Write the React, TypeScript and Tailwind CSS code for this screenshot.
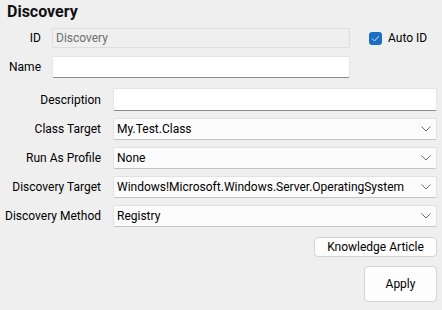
import React from "react";

function Chevron() {
  return (
    <svg width="10" height="6" viewBox="0 0 10 6" className="absolute right-[5px] top-1/2 -translate-y-1/2">
      <path d="M0.5 0.5 L5 5 L9.5 0.5" fill="none" stroke="#6b6b6b" strokeWidth="1" />
    </svg>
  );
}

function Combo({ value }: { value: string }) {
  return (
    <div className="relative ml-[12px] w-[324px] h-[22px] bg-[#fbfbfb] border border-[#e2e2e2] border-b-[#c4c4c4] rounded-[2px] flex items-center pl-[3px]">
      <span className="leading-none whitespace-nowrap">{value}</span>
      <Chevron />
    </div>
  );
}

export default function App() {
  const rows: [string, string][] = [
    ["Class Target", "My.Test.Class"],
    ["Run As Profile", "None"],
    ["Discovery Target", "Windows!Microsoft.Windows.Server.OperatingSystem"],
    ["Discovery Method", "Registry"],
  ];
  return (
    <div className="w-[442px] h-[310px] bg-[#efefef] font-['Roboto',sans-serif] text-[12px] text-black overflow-hidden">
      <div className="pl-[7px] text-[16px] font-bold leading-[24px] text-[#111]">Discovery</div>
      <div className="mt-[4px] flex items-center h-[20px]">
        <div className="w-[41px] text-right">ID</div>
        <div className="ml-[11px] w-[298px] h-[20px] border border-[#dedede] bg-[#efefef] rounded-[2px] flex items-center pl-[3px] text-[#6e6e6e]">
          Discovery
        </div>
        <div className="ml-[19px] w-[13px] h-[13px] rounded-[3px] bg-[#1b6ec2] flex items-center justify-center">
          <svg width="9" height="7" viewBox="0 0 9 7">
            <path d="M1 3.5 L3.5 6 L8 1" fill="none" stroke="#cfe3f7" strokeWidth="1" />
          </svg>
        </div>
        <span className="ml-[6px]">Auto ID</span>
      </div>
      <div className="mt-[8px] flex items-center h-[22px]">
        <div className="w-[41px] text-right">Name</div>
        <div className="ml-[11px] w-[298px] h-[22px] bg-white border border-[#e6e6e6] border-b-[#8a8a8a] rounded-[2px]" />
      </div>
      <div className="mt-[10px] flex items-center h-[23px]">
        <div className="w-[101px] text-right">Description</div>
        <div className="ml-[12px] w-[324px] h-[23px] bg-white border border-[#e6e6e6] border-b-[#8a8a8a] rounded-[2px]" />
      </div>
      {rows.map(([label, value]) => (
        <div key={label} className="flex items-center h-[22px] mt-[7px]">
          <div className="w-[101px] text-right whitespace-nowrap">{label}</div>
          <Combo value={value} />
        </div>
      ))}
      <div className="mt-[10px] flex justify-end pr-[5px]">
        <button className="w-[123px] h-[20px] bg-[#fdfdfd] border border-[#d4d4d4] rounded-[4px] flex items-center justify-center leading-none">
          Knowledge Article
        </button>
      </div>
      <div className="mt-[9px] flex justify-end pr-[5px]">
        <button className="w-[73px] h-[36px] bg-[#fdfdfd] border border-[#d4d4d4] rounded-[4px] flex items-center justify-center leading-none">
          Apply
        </button>
      </div>
    </div>
  );
}
